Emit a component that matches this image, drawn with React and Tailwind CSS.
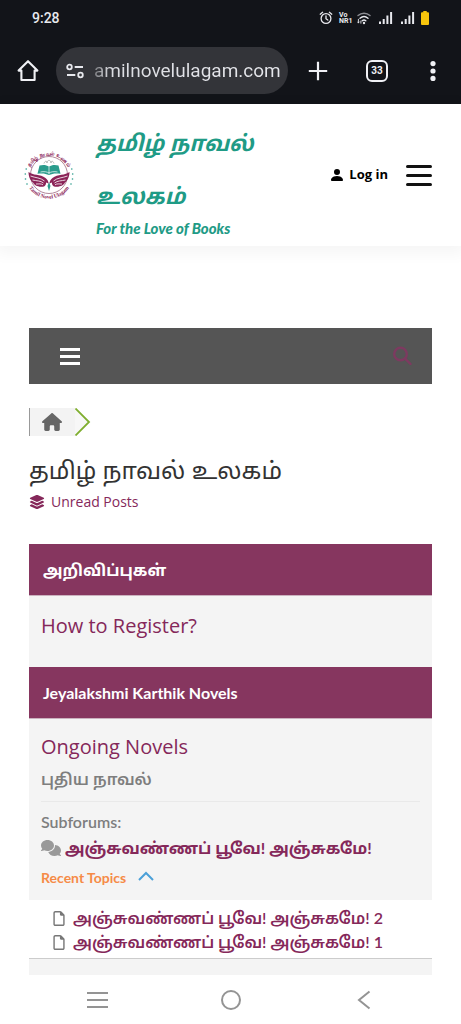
import React from "react";
import { FaComments, FaHouse, FaLayerGroup, FaRegFile } from "react-icons/fa6";
import { BsPersonFill } from "react-icons/bs";

const tamil = "font-['Noto_Sans','Noto_Sans_Tamil',sans-serif]";
const lato = "font-['Lato','Noto_Sans_Tamil',sans-serif]";

function Signal() {
  return (
    <svg className="h-3.5 w-3.5" viewBox="0 0 14 14" fill="#e8e9ee">
      <rect x="0" y="10.5" width="2" height="2.5" />
      <rect x="3.7" y="8" width="2" height="5" />
      <rect x="7.4" y="4.5" width="2" height="8.5" />
      <rect x="11.1" y="1" width="2" height="12" />
    </svg>
  );
}

function StatusBar() {
  return (
    <div className="flex items-center justify-between pr-8 pl-8 text-[#e8e9ee]">
      <span className="font-['Roboto',sans-serif] text-sm leading-5 font-medium">9:28</span>
      <div className="flex items-center">
        <svg className="h-3.5 w-3.5" viewBox="0 0 14 14" fill="none" stroke="#e8e9ee" strokeWidth="1.3" strokeLinecap="round">
          <circle cx="7" cy="7.5" r="4.9" />
          <path d="M7 4.8v2.9l1.8 1.3M1.2 3.2 3.6 1.3M12.8 3.2 10.4 1.3" />
        </svg>
        <span className="ml-1.5 flex w-3.5 flex-col font-['Roboto',sans-serif] text-[7px] leading-[6px] font-bold">
          <span>Vo</span>
          <span>NR1</span>
        </span>
        <svg className="ml-1 h-3.5 w-3.5" viewBox="0 0 14 14" fill="none" stroke="#e8e9ee" strokeWidth="1.4" strokeLinecap="round">
          <path d="M1 4.6C4.5 1.4 9.5 1.4 13 4.6" stroke="#8d8e94" />
          <path d="M3 7.3c2.5-2.2 5.5-2.2 8 0M5.2 9.7c1.2-1 2.4-1 3.6 0" />
          <circle cx="7" cy="12" r=".5" fill="#e8e9ee" />
          <path d="M1.4 8.3v3.5M.6 11l.8.9.8-.9M3.9 12.2V10" strokeWidth=".9" />
        </svg>
        <span className="ml-2"><Signal /></span>
        <span className="ml-2"><Signal /></span>
        <svg className="ml-1.5 h-3.5 w-2" viewBox="0 0 8 14" fill="#f8c50c">
          <path d="M2.3 0h3.4v1.2H7a1 1 0 0 1 1 1V13a1 1 0 0 1-1 1H1a1 1 0 0 1-1-1V2.2a1 1 0 0 1 1-1h1.3z" />
        </svg>
      </div>
    </div>
  );
}

function BrowserBar() {
  return (
    <div className="mt-[19px] flex items-center pr-4 pl-4">
      <button aria-label="Home" className="flex h-6 w-6 shrink-0 items-center justify-center">
        <svg className="h-6 w-6" viewBox="0 0 24 24" fill="none" stroke="#f0f1f5" strokeWidth="2.1" strokeLinejoin="round" strokeLinecap="round">
          <path d="M2.6 11.6 12 2.2l9.4 9.4h-2.8V21H5.4v-9.4z" />
        </svg>
      </button>
      <div className="ml-4 flex h-[47px] min-w-0 flex-1 items-center rounded-full bg-[#333439] pr-0.5 pl-2.5">
        <svg className="h-4 w-[18px] shrink-0" viewBox="0 0 18 16" fill="none" stroke="#e8e9ee" strokeWidth="1.8">
          <circle cx="3.5" cy="4" r="2.3" />
          <path d="M8.7 4h8.3M1 12h8.3" />
          <circle cx="14.5" cy="12" r="2.3" />
        </svg>
        <label htmlFor="address" className="sr-only">Address</label>
        <input
          id="address"
          readOnly
          defaultValue="amilnovelulagam.com"
          className="ml-2.5 h-8 w-full min-w-0 bg-linear-to-r from-[#77787c] from-0% via-[#dcdde2] via-8% to-[#e8e9ee] bg-clip-text font-['Roboto',sans-serif] text-[19px] leading-8 text-transparent outline-none"
        />
      </div>
      <button aria-label="New tab" className="ml-5 shrink-0">
        <svg className="h-5 w-5" viewBox="0 0 20 20" stroke="#f0f1f5" strokeWidth="2.2">
          <path d="M10 .8v18.4M.8 10h18.4" />
        </svg>
      </button>
      <button className="ml-[38px] flex h-[22px] w-[22px] shrink-0 items-center justify-center rounded-md border-2 border-[#f0f1f5] font-['Roboto',sans-serif] text-[10px] leading-none font-bold text-[#f0f1f5]">33</button>
      <button aria-label="More" className="ml-[33px] shrink-0">
        <svg className="h-6 w-6" viewBox="0 0 24 24" fill="#f0f1f5">
          <circle cx="12" cy="4.6" r="2.6" />
          <circle cx="12" cy="12" r="2.6" />
          <circle cx="12" cy="19.4" r="2.6" />
        </svg>
      </button>
    </div>
  );
}

function Logo() {
  return (
    <svg className="h-[52px] w-[50px] shrink-0" viewBox="0 0 50 52" role="img" aria-label="Tamil Novel Ulagam">
      <defs>
        <path id="arcTop" d="M4.500 27A20.500 20.500 0 0 1 45.500 27" />
        <path id="arcBottom" d="M2.500 34A24 24 0 0 0 47.500 34" />
      </defs>
      <circle cx="25" cy="26" r="18.500" fill="none" stroke="#a87990" strokeWidth=".9" />
      <text fill="#8b2458" fontSize="5.200" fontWeight="700" fontFamily="Noto Sans, sans-serif" textAnchor="middle">
        <textPath href="#arcTop" startOffset="50%">தமிழ் நாவல் உலகம்</textPath>
      </text>
      <text fill="#8b2458" fontSize="5.400" fontWeight="700" fontFamily="Liberation Serif, serif" textAnchor="middle">
        <textPath href="#arcBottom" startOffset="50%">Tamil Novel Ulagam</textPath>
      </text>
      <g fill="#2a9c8c">
        <path d="M15.5 16.5c4-1.2 7-.5 9.5 1.2 2.500-1.700 5.500-2.400 9.500-1.200l2 8.300c-4.500-.8-8-.5-11.500 1.200-3.500-1.700-7-2-11.500-1.200z" />
        <path d="m25 33 1.500 4-1.500 5-1.500-5z" />
        <circle cx="2.200" cy="20" r=".8" /><circle cx="1.300" cy="25" r=".8" /><circle cx="1.500" cy="30" r=".8" /><circle cx="3" cy="35" r=".8" />
        <circle cx="47.800" cy="20" r=".8" /><circle cx="48.700" cy="25" r=".8" /><circle cx="48.500" cy="30" r=".8" /><circle cx="47" cy="35" r=".8" />
      </g>
      <path d="M25 17.700v7.500M16.500 23c3.500-.8 6.500-.2 8.500 1 2-1.200 5-1.800 8.500-1" stroke="#fff" strokeWidth=".7" fill="none" />
      <path d="M20 14.500c1-3 3-3 3-.5 0-3.500 4-3.500 4 0 0-2.500 2-2.500 3 .5" fill="none" stroke="#a8aaa8" strokeWidth=".8" />
      <g fill="#8b2458">
        <path d="M4.500 23c4 3.500 12 2 17 6 2 1.600 3 3.500 3 5.500l-2.500-1c.3 1.500-.5 3-2 4-6 1-10-1.500-11-4C6 31.500 4.500 27 4.500 23z" />
        <path d="M45.500 23c-4 3.500-12 2-17 6-2 1.600-3 3.500-3 5.500l2.500-1c-.3 1.500.5 3 2 4 6 1 10-1.500 11-4 3-2 4.500-6.500 4.500-10.500z" />
      </g>
      <path d="M6.500 27c5 2 10 1.500 14 5M8.500 31c4 1 8 .5 11 3M12 35c3 0 5-.5 7 .8M43.500 27c-5 2-10 1.500-14 5M41.500 31c-4 1-8 .5-11 3M38 35c-3 0-5-.5-7 .8" fill="none" stroke="#fff" strokeWidth=".8" />
    </svg>
  );
}

function SiteHeader() {
  return (
    <header className="flex items-center bg-white pt-2 pr-[29px] pb-2 pl-6 shadow-[0_4px_14px_4px_rgba(0,0,0,0.04)]">
      <Logo />
      <a href="#home" className="ml-[22px] block min-w-0 flex-1 pt-1 text-[#1f9b86] italic">
        <span className={`${tamil} block text-[22px] leading-[53px] font-bold`}>
          தமிழ் நாவல்<br />உலகம்
        </span>
        <span className="-mt-1 block font-['Lato',sans-serif] text-[15px] leading-5 font-black">For the Love of Books</span>
      </a>
      <a href="#login" className="flex shrink-0 items-center text-black">
        <BsPersonFill className="h-4 w-4" />
        <span className="ml-1 font-['Open_Sans',sans-serif] text-[13px] font-bold">Log in</span>
      </a>
      <button aria-label="Menu" className="ml-[18px] flex w-[26px] shrink-0 flex-col gap-1.5">
        <span className="h-[3px] rounded-full bg-[#111]" />
        <span className="h-[3px] rounded-full bg-[#111]" />
        <span className="h-[3px] rounded-full bg-[#111]" />
      </button>
    </header>
  );
}

function CategoryTitle({ children }) {
  return (
    <h2 className={`${lato} flex h-[52px] items-center border-b border-[#cbb2bf] bg-[#86365f] px-3.5 text-base font-bold text-white`}>
      {children}
    </h2>
  );
}

function Topic({ children }) {
  return (
    <li className="flex h-6 items-center">
      <FaRegFile className="h-[15px] w-3 shrink-0 text-[#777]" />
      <a href="#topic" className="ml-2">{children}</a>
    </li>
  );
}

export default function App() {
  return (
    <div className="flex min-h-screen flex-col bg-white">
      <div className="bg-[#121419] pt-2 pb-2.5">
        <StatusBar />
        <BrowserBar />
      </div>
      <SiteHeader />
      <main className="px-[29px] pt-[82px]">
        <nav className="flex h-14 items-center justify-between bg-[#555] pr-5 pl-[31px]">
          <button aria-label="Forum menu" className="flex w-5 flex-col gap-1">
            <span className="h-[3px] bg-white" />
            <span className="h-[3px] bg-white" />
            <span className="h-[3px] bg-white" />
          </button>
          <button aria-label="Search">
            <svg className="h-5 w-5" viewBox="0 0 20 20" fill="none" stroke="#7d3a60" strokeWidth="2.4" strokeLinecap="round">
              <circle cx="8.500" cy="8" r="6.300" />
              <path d="m13 12.500 5.500 5.500" />
            </svg>
          </button>
        </nav>
        <div className="mt-6 flex h-7 items-center">
          <a href="#forum" aria-label="Forum home" className="flex h-full w-[46px] items-center border-l border-[#999] bg-[#f3f3f3] pl-3">
            <FaHouse className="h-[18px] w-5 text-[#666]" />
          </a>
          <svg className="h-7 w-4" viewBox="0 0 16 28">
            <path d="M0 0 14 14 0 28z" fill="#f7f7f7" />
            <path d="M.5.500 14 14 .5 27.500" fill="none" stroke="#7fae2f" strokeWidth="1.800" />
          </svg>
        </div>
        <h1 className={`${tamil} mt-4 text-2xl leading-9 text-[#333]`}>தமிழ் நாவல் உலகம்</h1>
        <a href="#unread" className="flex items-center font-['Open_Sans',sans-serif] text-sm leading-7 text-[#85285a]">
          <FaLayerGroup className="h-4 w-4" />
          <span className="ml-1.5">Unread Posts</span>
        </a>
        <section className="mt-7">
          <CategoryTitle>அறிவிப்புகள்</CategoryTitle>
          <div className="bg-[#f4f4f4] px-3 pt-3.5 pb-[25px]">
            <a href="#register" className="block font-['Open_Sans',sans-serif] text-xl leading-8 text-[#85285a]">How to Register?</a>
          </div>
        </section>
        <section>
          <CategoryTitle>Jeyalakshmi Karthik Novels</CategoryTitle>
          <div className="bg-[#f4f4f4] px-3 pt-3 pb-2">
            <a href="#ongoing" className="block font-['Open_Sans',sans-serif] text-xl leading-8 text-[#85285a]">Ongoing Novels</a>
            <p className={`${tamil} mt-0.5 text-base leading-7 font-semibold text-[#7e7e7e]`}>புதிய நாவல்</p>
            <hr className="mt-2 border-[#e9e9e9]" />
            <div className={`${lato} mt-2 text-base leading-6 font-semibold text-[#7e7e7e]`}>Subforums:</div>
            <a href="#subforum" className={`${lato} mt-0.5 flex items-center text-base leading-6 font-bold text-[#85285a]`}>
              <FaComments className="h-5 w-5 shrink-0 text-[#999]" />
              <span className="ml-1">அஞ்சுவண்ணப் பூவே! அஞ்சுகமே!</span>
            </a>
            <button className={`${lato} mt-1 flex items-center text-sm leading-7 font-bold text-[#f68b47]`}>
              Recent Topics
              <svg className="ml-3 h-4 w-4" viewBox="0 0 16 16" fill="none" stroke="#4ba0d8" strokeWidth="2">
                <path d="m1 10 7-7 7 7" />
              </svg>
            </button>
          </div>
          <ul className={`${lato} border-b border-[#ccc] pt-1.5 pb-1 pl-6 text-base leading-6 font-semibold text-[#85285a]`}>
            <Topic>அஞ்சுவண்ணப் பூவே! அஞ்சுகமே! 2</Topic>
            <Topic>அஞ்சுவண்ணப் பூவே! அஞ்சுகமே! 1</Topic>
          </ul>
          <div className="h-4 bg-[#f4f4f4]" />
        </section>
      </main>
      <nav className="mt-auto flex h-[49px] items-center justify-between px-[87px]">
        <button aria-label="Recent apps" className="flex w-[21px] flex-col gap-[5px]">
          <span className="h-0.5 bg-[#949494]" />
          <span className="h-0.5 bg-[#949494]" />
          <span className="h-0.5 bg-[#949494]" />
        </button>
        <button aria-label="Home screen" className="h-5 w-5 rounded-full border-2 border-[#949494]" />
        <button aria-label="Back">
          <svg className="h-5 w-5" viewBox="0 0 20 20" fill="none" stroke="#949494" strokeWidth="2">
            <path d="M15.500 1.500 5 10l10.500 8.500" />
          </svg>
        </button>
      </nav>
    </div>
  );
}
